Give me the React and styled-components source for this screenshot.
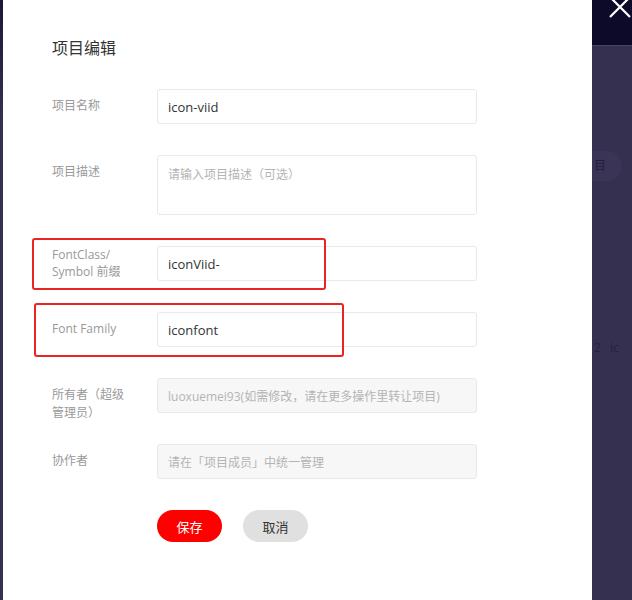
import React from 'react';
import styled, { createGlobalStyle } from 'styled-components';

const GlobalStyle = createGlobalStyle`
  html, body {
    margin: 0;
    padding: 0;
    background: #35304f;
  }
  body {
    font-family: "Open Sans", "Noto Sans CJK SC", sans-serif;
  }
`;

const rows = [
  { label: '项目名称', value: 'icon-viid', height: 35 },
  { label: '项目描述', placeholder: '请输入项目描述（可选）', height: 60, area: true },
  { label: 'FontClass/\nSymbol 前缀', value: 'iconViid-', height: 35, tight: true, mark: { left: -20, top: -8, width: 294, height: 52 } },
  { label: 'Font Family', value: 'iconfont', height: 35, mark: { left: -18, top: -9, width: 310, height: 54 } },
  { label: '所有者（超级\n管理员）', placeholder: 'luoxuemei93(如需修改，请在更多操作里转让项目)', height: 35, disabled: true },
  { label: '协作者', placeholder: '请在「项目成员」中统一管理', height: 35, disabled: true },
];

function App() {
  return (
    <Page>
      <GlobalStyle />
      <LeftEdge />
      <Panel>
        <Title>项目编辑</Title>
        {rows.map((r) => (
          <Row key={r.label} $h={r.height}>
            {r.mark && <Mark style={r.mark} />}
            <Label $tight={r.tight}>{r.label}</Label>
            <Field $h={r.height} $disabled={r.disabled}>
              {r.value ? <Value>{r.value}</Value> : <Placeholder $area={r.area}>{r.placeholder}</Placeholder>}
            </Field>
          </Row>
        ))}
        <Buttons>
          <Button $primary>保存</Button>
          <Button>取消</Button>
        </Buttons>
      </Panel>
      <Side>
        <SideHeader>
          <svg width="24" height="24" viewBox="0 0 24 24" style={{ marginTop: -5 }}>
            <path d="M2 2 L22 22 M22 2 L2 22" stroke="#ffffff" strokeWidth="2.2" fill="none" />
          </svg>
        </SideHeader>
        <SidePill>目</SidePill>
        <SideText>2&nbsp;&nbsp;&nbsp;ic</SideText>
      </Side>
    </Page>
  );
}

const Page = styled.div`
  display: flex;
  width: 632px;
  height: 600px;
  overflow: hidden;
`;

const LeftEdge = styled.div`
  width: 3px;
  background: linear-gradient(#1a1738, #35304f 20%);
`;

const Panel = styled.div`
  width: 589px;
  background: #ffffff;
  padding: 36px 0 0 49px;
  box-sizing: border-box;
`;

const Title = styled.div`
  font-size: 16px;
  color: #333;
  line-height: 24px;
  margin-bottom: 29px;
`;

const Row = styled.div`
  position: relative;
  display: flex;
  align-items: flex-start;
  height: ${(p) => p.$h}px;
  margin-bottom: 31px;
`;

const Mark = styled.div`
  position: absolute;
  border: 2px solid #e82424;
  border-radius: 3px;
  box-sizing: border-box;
  pointer-events: none;
`;

const Label = styled.div`
  width: 105px;
  flex: none;
  padding-top: ${(p) => (p.$tight ? '0' : '8px')};
  font-size: 12px;
  line-height: ${(p) => (p.$tight ? '17px' : '18px')};
  color: #999;
  white-space: pre-line;
`;

const Field = styled.div`
  width: 320px;
  height: ${(p) => p.$h}px;
  border: 1px solid #e9e9e9;
  border-radius: 3px;
  box-sizing: border-box;
  background: ${(p) => (p.$disabled ? '#f7f7f7' : '#ffffff')};
  padding: 0 10px;
  display: flex;
  align-items: center;
`;

const Value = styled.span`
  font-size: 13px;
  color: #333;
`;

const Placeholder = styled.span`
  font-size: 12px;
  color: #b4b4b4;
  align-self: ${(p) => (p.$area ? 'flex-start' : 'center')};
  margin-top: ${(p) => (p.$area ? '9px' : '0')};
`;

const Buttons = styled.div`
  display: flex;
  gap: 21px;
  margin-left: 105px;
`;

const Button = styled.div`
  width: 65px;
  height: 32px;
  border-radius: 16px;
  display: flex;
  align-items: center;
  justify-content: center;
  font-size: 13px;
  background: ${(p) => (p.$primary ? '#fe0000' : '#e0e0e0')};
  color: ${(p) => (p.$primary ? '#ffffff' : '#333')};
`;

const Side = styled.div`
  flex: 1;
  background: #35304f;
  display: flex;
  flex-direction: column;
`;

const SideHeader = styled.div`
  height: 45px;
  background: #0c0a28;
  border-bottom: 1px solid #48436a;
  display: flex;
  justify-content: flex-end;
`;

const SidePill = styled.div`
  margin-top: 105px;
  width: 28px;
  height: 30px;
  border-radius: 0 15px 15px 0;
  background: #3a3556;
  color: #25213f;
  font-size: 12px;
  line-height: 30px;
  padding-left: 2px;
`;

const SideText = styled.div`
  margin-top: 158px;
  font-size: 12px;
  color: #25213f;
  padding-left: 2px;
`;

export default App;
